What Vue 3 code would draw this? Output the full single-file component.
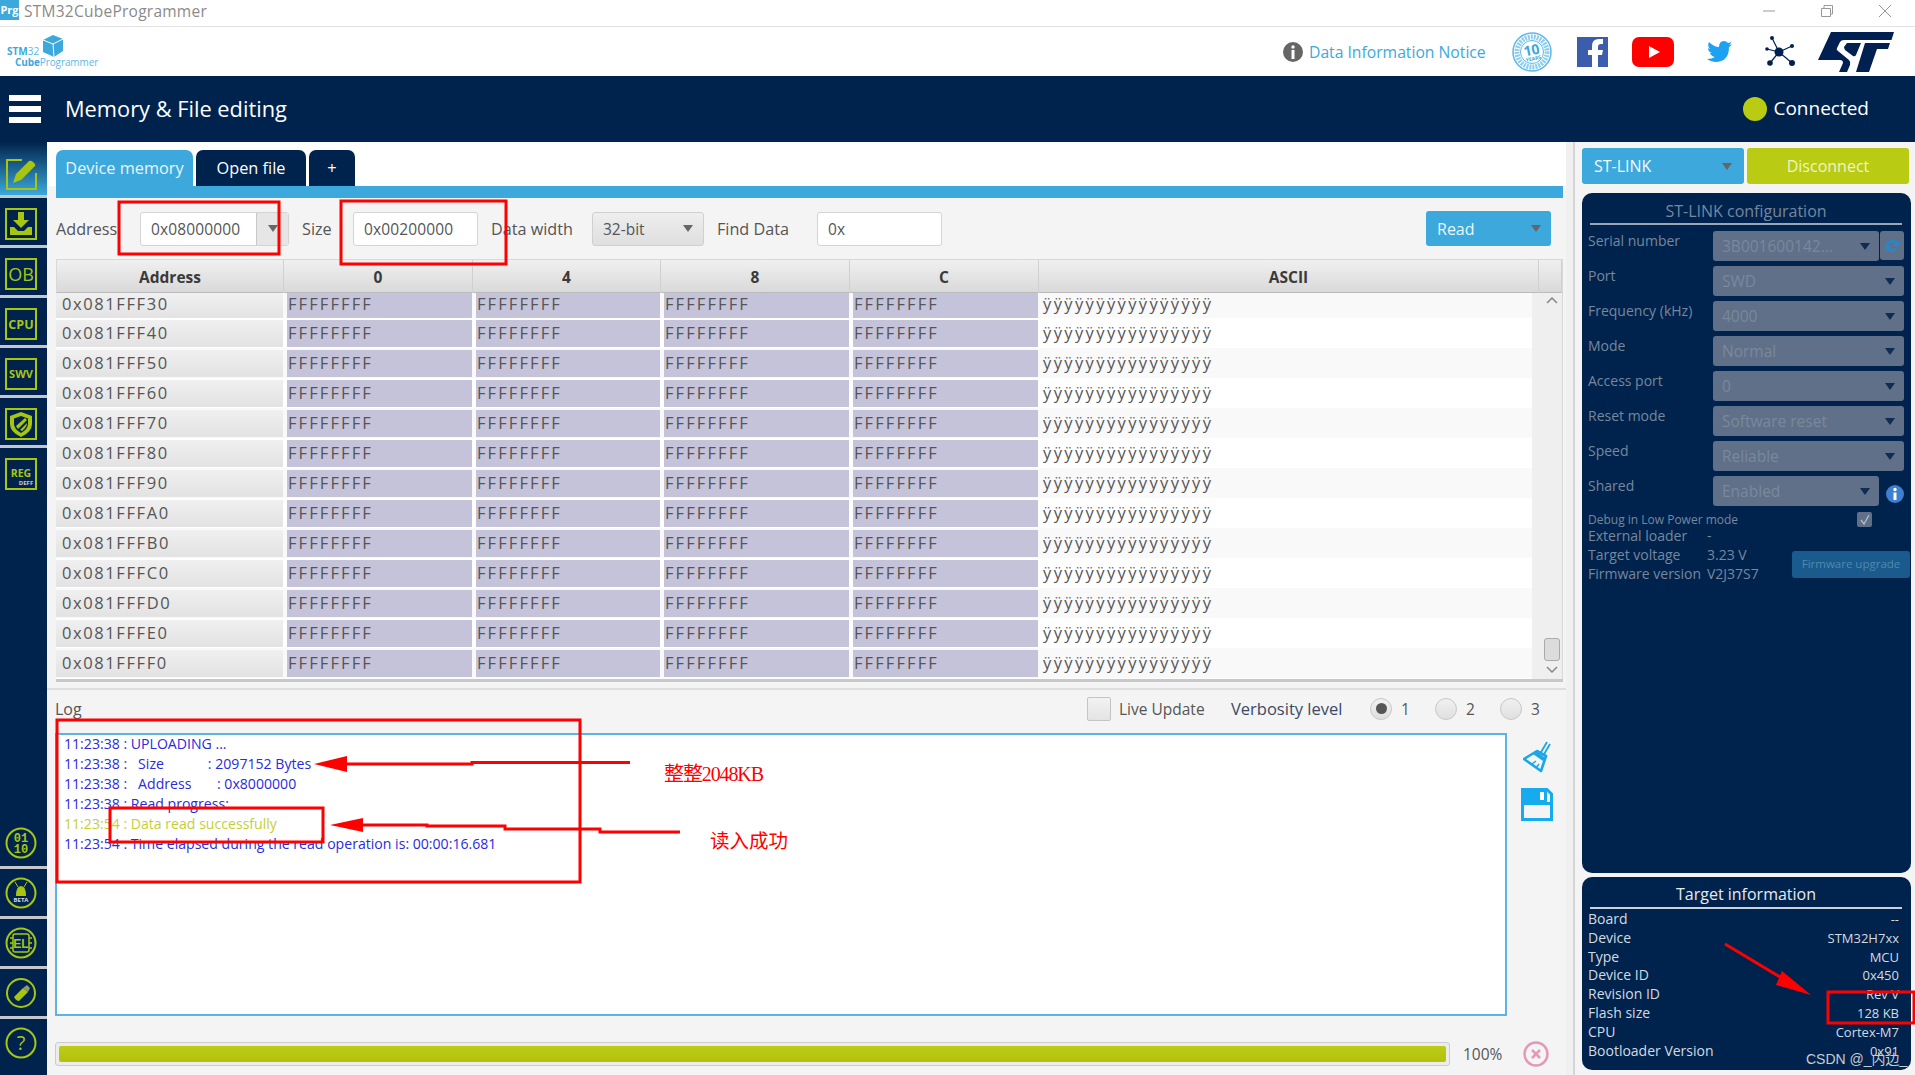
<script setup>
const rows = ['30','40','50','60','70','80','90','A0','B0','C0','D0','E0','F0'].map(s => '0x081FFF' + s)
const cfg = [
  { l: 'Serial number', v: '3B001600142...', cls: 'short', refresh: true },
  { l: 'Port', v: 'SWD' },
  { l: 'Frequency (kHz)', v: '4000' },
  { l: 'Mode', v: 'Normal' },
  { l: 'Access port', v: '0' },
  { l: 'Reset mode', v: 'Software reset' },
  { l: 'Speed', v: 'Reliable' },
  { l: 'Shared', v: 'Enabled', cls: 'short', info: true }
]
const target = [
  ['Board', '--'], ['Device', 'STM32H7xx'], ['Type', 'MCU'], ['Device ID', '0x450'],
  ['Revision ID', 'Rev V'], ['Flash size', '128 KB'], ['CPU', 'Cortex-M7'], ['Bootloader Version', '0x91']
]
const log = [
  { t: '11:23:38 : UPLOADING ...' },
  { t: '11:23:38 :   Size            : 2097152 Bytes' },
  { t: '11:23:38 :   Address       : 0x8000000' },
  { t: '11:23:38 : Read progress:' },
  { t: '11:23:54 : Data read successfully', ok: true },
  { t: '11:23:54 : Time elapsed during the read operation is: 00:00:16.681' }
]
</script>

<template>
  <div class="app">
    <div class="titlebar">
      <span class="prg">Prg</span>
      <span class="apptitle">STM32CubeProgrammer</span>
      <div class="winctl">
        <svg width="12" height="12" viewBox="0 0 12 12"><path d="M0 6H12" stroke="#999" fill="none"/></svg>
        <svg width="12" height="12" viewBox="0 0 12 12"><path d="M.5 3.5H9.5V11.5H.5ZM3 3V.5H11.5V9H10" stroke="#999" fill="none"/></svg>
        <svg width="12" height="12" viewBox="0 0 12 12"><path d="M0 0L12 12M12 0L0 12" stroke="#999" fill="none"/></svg>
      </div>
    </div>

    <div class="logobar">
      <div class="cubelogo">
        <svg class="cube" width="20" height="22" viewBox="0 0 20 22"><path d="M10 0L20 4V16L11 22L0 17V5Z" fill="#3ca8dc"/><path d="M0 5L10 9L20 4M10 9L11 22" stroke="#fff" fill="none"/></svg>
        <span class="l1"><b>STM</b>32</span>
        <span class="l2"><b>Cube</b>Programmer</span>
      </div>
      <div class="logoright">
        <svg class="i" width="20" height="20" viewBox="0 0 20 20"><circle cx="10" cy="10" r="10" fill="#666"/><rect x="8.5" y="8" width="3" height="9" fill="#fff"/><circle cx="10" cy="5" r="1.7" fill="#fff"/></svg>
        <span class="notice">Data Information Notice</span>
        <svg class="badge" width="40" height="40" viewBox="0 0 40 40"><circle cx="20" cy="20" r="19" fill="#fff" stroke="#5cb8e6" stroke-width="1.500"/><circle cx="20" cy="20" r="15" fill="none" stroke="#8ccdee" stroke-width="5" stroke-dasharray="2 1"/><circle cx="20" cy="20" r="11.500" fill="#fff" stroke="#5cb8e6"/><g transform="rotate(-12 20 20)" font-family="Open Sans" font-weight="700" text-anchor="middle" fill="#3ca8dc"><text x="20" y="23" font-size="14">10</text><text x="20" y="28.500" font-size="5">YEARS</text></g></svg>
        <svg class="fb" width="31" height="30" viewBox="0 0 31 30"><rect width="31" height="30" fill="#3b5dab"/><path d="M21 30V18H25L26 13H21V10Q21 7 24 7H26V2H22Q15 2 15 9V13H11V18H15V30Z" fill="#fff"/></svg>
        <svg class="yt" width="42" height="30" viewBox="0 0 42 30"><rect width="42" height="30" rx="7" fill="#f00"/><path d="M17 9L28 15L17 21Z" fill="#fff"/></svg>
        <svg class="tw" width="25" height="22" viewBox="0 0 25 22"><path d="M25 3Q23 4 22 4Q24 3 24 1Q22 2 21 2Q19 0 17 0Q12 0 12 6Q7 6 2 1Q0 5 3 8Q2 8 1 7Q1 11 5 12H3Q4 15 8 16Q5 18 0 18Q4 21 8 21Q22 21 22 6Q24 5 25 3Z" fill="#1da1f2"/></svg>
        <svg class="net" width="31" height="31" viewBox="0 0 31 31"><g stroke="#002052" stroke-width="1.2"><path d="M15 16L8 2M15 16L28 10M15 16L28 27M15 16L3 13M15 16L6 27"/></g><g fill="#002052"><circle cx="15" cy="16" r="4.5"/><circle cx="8" cy="2" r="2"/><circle cx="28" cy="10" r="2"/><circle cx="28" cy="27" r="3"/><circle cx="3" cy="13" r="1.8"/><circle cx="6" cy="27" r="2.8"/></g></svg>
        <svg class="st" width="77" height="40" viewBox="0 0 77 40"><path fill="#002052" d="M13 0H76L73.500 8H26Q23 8 22 10L19 16Q18 18 20 19L31 28Q33 30 32 33L29 40H21L25 31Q25 28 22 28H0Z"/><path fill="#002052" d="M29 11H43L38 23Q37 25 35 24L27 18Q26 16 26 15ZM47 11H72L70 17H59L51 40H38Z"/></svg>
      </div>
    </div>

    <div class="header">
      <div class="burger"><i></i><i></i><i></i></div>
      <span class="pagetitle">Memory &amp; File editing</span>
      <span class="dot"></span>
      <span class="connected">Connected</span>
    </div>

    <div class="body">
      <aside class="side">
        <div class="sidetop">
          <div class="si active">
            <svg width="34" height="34" viewBox="0 0 34 34"><path d="M18 3H3V32H32V16" fill="none" stroke="#a8c60f" stroke-width="2"/><path d="M9 26L12 17L25 4Q27 3 29 5L31 7Q32 9 30 10L17 23Z" fill="#a8c60f"/></svg>
          </div>
          <div class="si">
            <svg width="32" height="32" viewBox="0 0 32 32"><rect x="1" y="1" width="30" height="30" fill="none" stroke="#a8c60f" stroke-width="2"/><path d="M13 4H19V12H24L16 20L8 12H13ZM5 19H9L13 23H19L23 19H27V27H5Z" fill="#a8c60f"/></svg>
          </div>
          <div class="si">
            <svg width="32" height="32" viewBox="0 0 32 32"><rect x="1" y="1" width="30" height="30" fill="none" stroke="#a8c60f" stroke-width="2"/><text x="16" y="23" text-anchor="middle" font-size="18" fill="#a8c60f" font-family="Open Sans">OB</text></svg>
          </div>
          <div class="si">
            <svg width="32" height="32" viewBox="0 0 32 32"><rect x="1" y="1" width="30" height="30" fill="none" stroke="#a8c60f" stroke-width="2"/><text x="16" y="21" text-anchor="middle" font-size="12.500" font-weight="700" fill="#a8c60f" font-family="Open Sans">CPU</text></svg>
          </div>
          <div class="si">
            <svg width="32" height="32" viewBox="0 0 32 32"><rect x="1" y="1" width="30" height="30" fill="none" stroke="#a8c60f" stroke-width="2"/><text x="16" y="20" text-anchor="middle" font-size="11" font-weight="700" fill="#a8c60f" font-family="Open Sans">SWV</text></svg>
          </div>
          <div class="si">
            <svg width="32" height="32" viewBox="0 0 32 32"><rect x="1" y="1" width="30" height="30" fill="none" stroke="#a8c60f" stroke-width="2"/><path d="M16 4L27 8V16Q27 24 16 29Q5 24 5 16V8Z" fill="#a8c60f"/><path d="M16 8L23 10.500V16Q23 21 16 25Q9 21 9 16V10.500Z" fill="#00234d"/><path d="M11 18L20 10L22 12L13 21ZM15 22L22 15Q22 19 17 23Z" fill="#a8c60f"/></svg>
          </div>
          <div class="si nosep">
            <svg width="32" height="32" viewBox="0 0 32 32"><rect x="1" y="1" width="30" height="30" fill="none" stroke="#a8c60f" stroke-width="2"/><text x="16" y="19" text-anchor="middle" font-size="10.500" font-weight="700" fill="#a8c60f" font-family="Open Sans">REG</text><text x="21" y="27" text-anchor="middle" font-size="6" font-weight="700" fill="#c8ccd4" font-family="Open Sans">DEFF</text></svg>
          </div>
        </div>
        <div class="sidebot">
          <div class="si round">
            <svg width="32" height="32" viewBox="0 0 32 32"><circle cx="16" cy="16" r="14.500" fill="none" stroke="#a8c60f" stroke-width="2"/><text x="16" y="15" text-anchor="middle" font-size="12" font-weight="700" fill="#a8c60f" font-family="Liberation Mono">01</text><text x="16" y="25.500" text-anchor="middle" font-size="12" font-weight="700" fill="#a8c60f" font-family="Liberation Mono">10</text></svg>
          </div>
          <div class="si round">
            <svg width="32" height="32" viewBox="0 0 32 32"><circle cx="16" cy="16" r="14.500" fill="none" stroke="#a8c60f" stroke-width="2"/><path d="M10 5L13 10M22 5L19 10" stroke="#a8c60f" fill="none"/><path d="M11 19Q11 9 16 9Q21 9 21 19Z" fill="#a8c60f"/><text x="16" y="25" text-anchor="middle" font-size="6" font-weight="700" fill="#d6dbe0" font-family="Open Sans">BETA</text></svg>
          </div>
          <div class="si round">
            <svg width="32" height="32" viewBox="0 0 32 32"><circle cx="16" cy="16" r="14.500" fill="none" stroke="#a8c60f" stroke-width="2"/><rect x="8" y="7" width="16" height="18" rx="2" fill="none" stroke="#a8c60f" stroke-width="1.500"/><path d="M5 11H8M5 16H8M5 21H8M24 11H27M24 16H27M24 21H27" stroke="#a8c60f" stroke-width="1.500"/><text x="16" y="21" text-anchor="middle" font-size="12" font-weight="700" fill="#a8c60f" font-family="Liberation Sans">EL</text></svg>
          </div>
          <div class="si round">
            <svg width="32" height="32" viewBox="0 0 32 32"><circle cx="16" cy="16" r="14" fill="none" stroke="#a8c60f" stroke-width="2"/><path d="M9 20L18 11L23 15L14 24Q11 24 9 20Z" fill="#a8c60f"/><path d="M18 11L22 8L25 11L23 15Z" fill="#8d9a6a"/></svg>
          </div>
          <div class="si round nosep">
            <svg width="32" height="32" viewBox="0 0 32 32"><circle cx="16" cy="16" r="14.500" fill="none" stroke="#a8c60f" stroke-width="2"/><text x="16" y="23" text-anchor="middle" font-size="20" fill="#a8c60f" font-family="Open Sans">?</text></svg>
          </div>
        </div>
      </aside>

      <main class="main">
        <div class="tabstrip">
          <span class="tab on">Device memory</span>
          <span class="tab off">Open file</span>
          <span class="tab plus">+</span>
        </div>
        <div class="tabbar"></div>

        <div class="toolbar">
          <span class="lb w84">Address</span>
          <div class="combo"><span class="ctext">0x08000000</span><span class="carrow"><i class="tri"></i></span></div>
          <span class="lb w51 ml">Size</span>
          <div class="field">0x00200000</div>
          <span class="lb w101 ml">Data width</span>
          <div class="sel32"><span>32-bit</span><i class="tri"></i></div>
          <span class="lb w100 ml">Find Data</span>
          <div class="field">0x</div>
          <div class="readbtn"><span>Read</span><i class="tri"></i></div>
        </div>

        <div class="table">
          <div class="thead">
            <span>Address</span><span>0</span><span>4</span><span>8</span><span>C</span><span>ASCII</span><span></span>
          </div>
          <div class="tbody">
            <div class="trows">
              <div v-for="(r, i) in rows" :key="r" class="tr" :class="{ first: i === 0, even: i % 2 === 1 }">
                <span class="cell addr">{{ r }}</span>
                <span class="cell data">FFFFFFFF</span>
                <span class="cell data">FFFFFFFF</span>
                <span class="cell data">FFFFFFFF</span>
                <span class="cell data">FFFFFFFF</span>
                <span class="cell ascii">ÿÿÿÿÿÿÿÿÿÿÿÿÿÿÿÿ</span>
              </div>
            </div>
            <div class="scroll">
              <svg width="12" height="8" viewBox="0 0 12 8"><path d="M1 6L6 1L11 6" fill="none" stroke="#888" stroke-width="1.500"/></svg>
              <span class="thumb"></span>
              <svg width="12" height="8" viewBox="0 0 12 8"><path d="M1 2L6 7L11 2" fill="none" stroke="#888" stroke-width="1.500"/></svg>
            </div>
          </div>
        </div>

        <div class="logrule"></div>

        <div class="loghead">
          <span class="loglabel">Log</span>
          <span class="cb"></span>
          <span class="live">Live Update</span>
          <span class="verb">Verbosity level</span>
          <span class="radio sel"><i></i></span><span class="rl">1</span>
          <span class="radio"></span><span class="rl">2</span>
          <span class="radio"></span><span class="rl">3</span>
        </div>

        <div class="logrow">
          <div class="logbox">
            <div v-for="(l, i) in log" :key="i" class="logline" :class="{ ok: l.ok }">{{ l.t }}</div>
          </div>
          <div class="logtools">
            <svg width="28" height="32" viewBox="0 0 28 32"><path d="M17 13L24 1M20 15L27 3" stroke="#1aa7e8" stroke-width="1.800" fill="none"/><path d="M1 18L14 10L23 15L18 30Z" fill="none" stroke="#1aa7e8" stroke-width="2.600" stroke-linejoin="round"/><path d="M13 10L22 17L20 20L10 13Z" fill="#1aa7e8"/><path d="M9 23L13 20M13 27L16 23" stroke="#1aa7e8" stroke-width="1.500"/></svg>
            <svg width="32" height="33" viewBox="0 0 32 33"><path d="M1.500 1.500H26L30.500 6V31.500H1.500Z" fill="none" stroke="#16aaef" stroke-width="3"/><path d="M1.500 1.500H26V15H1.500ZM1.500 14H30.500V17H1.500Z" fill="#16aaef"/><rect x="19" y="4" width="4" height="8" fill="#fff"/></svg>
          </div>
        </div>

        <div class="progressrow">
          <div class="progress"><div class="fill"></div></div>
          <span class="pct">100%</span>
          <svg class="cancel" width="26" height="26" viewBox="0 0 26 26"><circle cx="13" cy="13" r="11.500" fill="none" stroke="#e29ab8" stroke-width="2.500"/><path d="M9 9L17 17M17 9L9 17" stroke="#e29ab8" stroke-width="2.500"/></svg>
        </div>
      </main>

      <div class="splitter"></div>

      <section class="right">
        <div class="conn">
          <div class="stlink"><span>ST-LINK</span><i class="tri"></i></div>
          <div class="disc">Disconnect</div>
        </div>

        <div class="panel cfg">
          <div class="ptitle dim">ST-LINK configuration</div>
          <div class="prule"></div>
          <div v-for="c in cfg" :key="c.l" class="cfgrow">
            <span class="clabel">{{ c.l }}</span>
            <div class="cselect" :class="c.cls"><span>{{ c.v }}</span><i class="tri dark"></i></div>
            <div v-if="c.refresh" class="refresh">
              <svg width="18" height="18" viewBox="0 0 18 18"><path d="M3 8Q4 3 9 3Q12 3 14 5L16 3V9H10L12 7Q11 5.500 9 5.500Q6.500 5.500 5.500 8ZM15 10Q14 15 9 15Q6 15 4 13L2 15V9H8L6 11Q7 12.500 9 12.500Q11.500 12.500 12.500 10Z" fill="#2a86c8"/></svg>
            </div>
            <svg v-if="c.info" class="infoi" width="18" height="18" viewBox="0 0 18 18"><circle cx="9" cy="9" r="9" fill="#3f7fd0"/><rect x="7.500" y="7.500" width="3" height="7.500" fill="#fff"/><circle cx="9" cy="4.500" r="1.700" fill="#fff"/></svg>
          </div>
          <div class="debug">
            <span>Debug in Low Power mode</span>
            <span class="ck"><svg width="12" height="12" viewBox="0 0 12 12"><path d="M2 6L5 10L10 1" fill="none" stroke="#b4bcc8" stroke-width="1.300"/></svg></span>
          </div>
          <div class="fwwrap">
            <div class="fwinfo">
              <div class="fwline"><span class="fwk">External loader</span><span>-</span></div>
              <div class="fwline"><span class="fwk">Target voltage</span><span>3.23 V</span></div>
              <div class="fwline"><span class="fwk">Firmware version</span><span>V2J37S7</span></div>
            </div>
            <div class="fwbtn">Firmware upgrade</div>
          </div>
        </div>

        <div class="panel tgt">
          <div class="ptitle">Target information</div>
          <div class="prule light"></div>
          <div class="tgtrows">
            <div v-for="t in target" :key="t[0]" class="tgtrow"><span>{{ t[0] }}</span><span>{{ t[1] }}</span></div>
          </div>
        </div>
      </section>
    </div>

    <svg class="marks" width="1915" height="1075" viewBox="0 0 1915 1075">
      <g fill="none" stroke="#f00" stroke-width="3">
        <rect x="119" y="202" width="160" height="52"/>
        <rect x="341" y="201" width="165" height="63"/>
        <rect x="57" y="720" width="523" height="162"/>
        <rect x="110" y="808" width="213" height="34"/>
        <rect x="1828" y="992" width="86" height="31"/>
        <path d="M345 764H472V762.500H630"/>
        <path d="M360 825H427V826H505V829H600V832H680"/>
        <path d="M1725 944L1790 983"/>
      </g>
      <path d="M314 764L347 756V772Z" fill="#f00"/>
      <path d="M330 825L363 818V832Z" fill="#f00"/>
      <path d="M1811 995L1782 971L1776 985Z" fill="#f00"/>
      <text x="664" y="781" class="zh" font-size="20" textLength="100">整整2048KB</text>
      <text x="710" y="848" class="zh" font-size="19.500">读入成功</text>
      <text x="1806" y="1064" class="wm">CSDN @_内边_</text>
    </svg>
  </div>
</template>

<style>
html, body { margin: 0; padding: 0; background: #fff; }
</style>

<style scoped>
.app {
  position: relative;
  width: 1915px;
  height: 1075px;
  overflow: hidden;
  display: flex;
  flex-direction: column;
  font-family: "Open Sans", "Noto Sans CJK SC", sans-serif;
  color: #444;
  background: #fff;
}
.titlebar {
  height: 26px;
  flex: none;
  display: flex;
  align-items: flex-start;
  border-bottom: 1px solid #e2e2e2;
}
.prg {
  width: 19px;
  height: 20px;
  background: #3ca8dc;
  color: #fff;
  font-size: 11px;
  font-weight: 700;
  line-height: 19px;
  text-align: center;
}
.apptitle {
  margin-left: 5px;
  font-size: 15.5px;
  letter-spacing: 0.25px;
  line-height: 22px;
  color: #8a8a8a;
}
.winctl {
  margin-left: auto;
  display: flex;
  gap: 46px;
  padding: 5px 24px 0 0;
}
.logobar {
  height: 49px;
  flex: none;
  display: flex;
  align-items: center;
  justify-content: space-between;
}
.cubelogo {
  position: relative;
  width: 100px;
  height: 33px;
  margin-left: 7px;
  color: #5cb8e6;
  font-size: 10px;
  line-height: 12px;
}
.cubelogo b { color: #3ca8dc; }
.cube { position: absolute; left: 36px; top: 0; }
.l1 { position: absolute; left: 0; top: 10px; }
.l2 { position: absolute; left: 8px; top: 21px; letter-spacing: -0.1px; }
.logoright {
  display: flex;
  align-items: center;
  padding-right: 20px;
}
.notice {
  margin-left: 6px;
  width: 178px;
  color: #3ca8dc;
  font-size: 15.700px;
  line-height: 20px;
  white-space: nowrap;
}
.badge { margin-left: 25px; }
.fb { margin-left: 25px; }
.yt { margin-left: 24px; }
.tw { margin-left: 33px; }
.net { margin-left: 32px; }
.st { margin-left: 23px; }
.header {
  height: 66px;
  flex: none;
  display: flex;
  align-items: center;
  background: #00234d;
  color: #fff;
}
.burger {
  width: 32px;
  height: 28px;
  margin-left: 9px;
  display: flex;
  flex-direction: column;
  justify-content: space-between;
}
.burger i { display: block; height: 6px; background: #fff; }
.pagetitle { margin-left: 24px; padding-bottom: 2px; font-size: 21.800px; }
.dot {
  width: 24px;
  height: 24px;
  margin-left: auto;
  border-radius: 50%;
  background: #b9cb12;
}
.connected { margin: 0 46px 0 6px; padding-bottom: 2px; font-size: 19px; }

.body {
  flex: 1;
  min-height: 0;
  display: flex;
  background: #f4f4f4;
}
.side {
  width: 47px;
  flex: none;
  display: flex;
  flex-direction: column;
  justify-content: space-between;
  background: #00234d;
}
.si {
  height: 47px;
  box-sizing: content-box;
  display: flex;
  align-items: center;
  justify-content: center;
  padding-right: 5px;
  border-bottom: 3px solid #c4c8cc;
}
.sidetop .si { height: 42px; padding-top: 5px; }
.si.nosep { border-bottom: none; }
.sidetop .si.active {
  height: 43px;
  padding-top: 10px;
  background: linear-gradient(#00234d, #3ca8dc);
}
.sidetop { display: flex; flex-direction: column; }
.sidebot { display: flex; flex-direction: column; padding-bottom: 9px; }

.main {
  width: 1519px;
  flex: none;
  display: flex;
  flex-direction: column;
}
.tabstrip {
  height: 44px;
  padding: 8px 3px 0 9px;
  box-sizing: border-box;
  display: flex;
  gap: 3px;
  background: #fff;
}
.tab {
  display: flex;
  align-items: center;
  justify-content: center;
  height: 36px;
  border-radius: 7px 7px 0 0;
  color: #fff;
  font-size: 16.300px;
  background: #00234d;
}
.tab.on { width: 137px; background: #3ca8dc; color: #e8f5fb; }
.tab.off { width: 110px; }
.tab.plus { width: 46px; }
.tabbar {
  height: 12px;
  margin: 0 3px 0 9px;
  background: #3ca8dc;
}
.toolbar {
  height: 35px;
  margin: 13px 15px 0 9px;
  display: flex;
  align-items: center;
}
.lb { font-size: 16.200px; color: #555; white-space: nowrap; }
.w84 { width: 84px; }
.w51 { width: 51px; }
.w101 { width: 101px; }
.w100 { width: 100px; }
.ml { margin-left: 13px; }
.combo {
  width: 149px;
  height: 34px;
  box-sizing: border-box;
  display: flex;
  border: 1px solid #d4d4d4;
  border-radius: 3px;
  background: #fff;
  font-size: 15.500px;
}
.ctext { width: 115px; padding-left: 10px; line-height: 33px; box-sizing: border-box; color: #555; letter-spacing: .15px; }
.carrow {
  flex: 1;
  display: flex;
  align-items: center;
  justify-content: center;
  background: #e6e6e6;
  border-left: 1px solid #c8c8c8;
}
.tri {
  display: inline-block;
  width: 0;
  height: 0;
  border-left: 5px solid transparent;
  border-right: 5px solid transparent;
  border-top: 7px solid #666;
}
.field {
  width: 125px;
  height: 34px;
  box-sizing: border-box;
  padding-left: 10px;
  border: 1px solid #d4d4d4;
  border-radius: 3px;
  background: #fff;
  color: #555;
  font-size: 15.500px;
  letter-spacing: .15px;
  line-height: 33px;
}
.sel32 {
  width: 112px;
  height: 34px;
  box-sizing: border-box;
  padding: 0 10px;
  display: flex;
  align-items: center;
  justify-content: space-between;
  border: 1px solid #d0d0d0;
  border-radius: 3px;
  background: linear-gradient(#eee, #dfdfdf);
  color: #555;
  font-size: 15.500px;
}
.readbtn {
  margin-left: auto;
  width: 125px;
  height: 35px;
  box-sizing: border-box;
  padding: 0 10px 0 11px;
  display: flex;
  align-items: center;
  justify-content: space-between;
  border-radius: 3px;
  background: #3ca8dc;
  color: #eaf6fc;
  font-size: 16px;
}

.table {
  height: 423px;
  margin: 13px 3px 0 9px;
  display: flex;
  flex-direction: column;
  box-sizing: border-box;
  border-bottom: 3px solid #c8c8c8;
}
.thead {
  height: 34px;
  flex: none;
  display: grid;
  grid-template-columns: 227px 189px 188px 189px 189px 500px 1fr;
  box-sizing: border-box;
  border: 1px solid #d8d8d8;
  border-bottom-color: #bbb;
  background: linear-gradient(#f0f0f0, #d9d9d9);
}
.thead span {
  text-align: center;
  font-size: 15.500px;
  font-weight: 700;
  line-height: 35px;
  color: #3a3a3a;
  border-right: 1px solid #d0d0d0;
}
.tbody { flex: 1; min-height: 0; display: flex; background: #fff; }
.trows { width: 1476px; display: flex; flex-direction: column; }
.tr {
  height: 30px;
  flex: none;
  display: grid;
  grid-template-columns: 227px 189px 188px 189px 189px 494px;
  box-sizing: border-box;
  padding: 2px 0 1px;
  background: #f9f9f9;
  overflow: hidden;
}
.tr.even { background: #fff; }
.tr.first { height: 25px; padding-top: 0; align-items: end; }
.cell {
  height: 27px;
  line-height: 26px;
  font-size: 16.500px;
  white-space: nowrap;
  box-sizing: border-box;
}
.tr.first .cell { line-height: 22px; }
.addr {
  padding-left: 6px;
  background: linear-gradient(#f0f0f0, #e2e2e2);
  color: #555;
  letter-spacing: 1.600px;
}
.data {
  margin-left: 4px;
  padding-left: 1px;
  background: #c5c3da;
  color: #555;
  letter-spacing: 2.100px;
}
.ascii {
  margin-left: 4px;
  padding-left: 1px;
  color: #555;
  letter-spacing: 2.380px;
}
.scroll {
  flex: 1;
  display: flex;
  flex-direction: column;
  align-items: center;
  justify-content: flex-end;
  box-sizing: border-box;
  padding: 4px 0 6px 9px;
  background: #efefef;
  border-right: 1px solid #d8d8d8;
}
.scroll svg:first-child { margin-bottom: auto; }
.thumb {
  width: 16px;
  height: 23px;
  margin: 0 0 4px;
  background: #dcdcdc;
  border: 1px solid #aaa;
  border-radius: 3px;
  box-sizing: border-box;
}
.logrule {
  height: 2px;
  margin-top: 6px;
  background: #dedede;
}
.loghead {
  height: 43px;
  box-sizing: border-box;
  padding-bottom: 6px;
  margin: 0 0 0 8px;
  display: flex;
  align-items: center;
}
.loglabel { width: 1032px; font-size: 16px; color: #555; }
.cb {
  width: 24px;
  height: 24px;
  box-sizing: border-box;
  border: 1px solid #c4c4c4;
  border-radius: 2px;
  background: linear-gradient(#f2f2f2, #e4e4e4);
}
.live { margin-left: 8px; width: 112px; font-size: 15.500px; color: #555; }
.verb { width: 139px; font-size: 16.500px; color: #3a4a63; }
.radio {
  width: 22px;
  height: 22px;
  box-sizing: border-box;
  display: flex;
  align-items: center;
  justify-content: center;
  border: 1px solid #c8c8c8;
  border-radius: 50%;
  background: linear-gradient(#f0f0f0, #e0e0e0);
}
.radio i { width: 11px; height: 11px; border-radius: 50%; background: #555; }
.rl { width: 43px; padding-left: 9px; box-sizing: border-box; font-size: 15.500px; color: #555; }
.logrow { height: 283px; display: flex; margin-left: 8px; }
.logbox {
  width: 1452px;
  box-sizing: border-box;
  padding: 0 0 0 7px;
  border: 2px solid #5ab5e6;
  background: #fff;
}
.logline {
  height: 20px;
  line-height: 17px;
  font-size: 14.100px;
  color: #2a2adf;
  white-space: pre;
}
.logline.ok { color: #c4cf35; }
.logtools {
  flex: 1;
  display: flex;
  flex-direction: column;
  align-items: center;
  gap: 15px;
  padding-top: 8px;
}
.progressrow {
  margin: 26px 0 0 8px;
  height: 24px;
  display: flex;
  align-items: center;
}
.progress {
  width: 1395px;
  height: 24px;
  box-sizing: border-box;
  padding: 3px;
  border: 1px solid #ccc;
  border-radius: 3px;
  background: #ececec;
}
.fill { height: 100%; border-radius: 2px; background: linear-gradient(#bccb14, #b2c10c); }
.pct { width: 60px; padding-left: 13px; box-sizing: border-box; font-size: 15.500px; color: #555; }
.cancel { margin-left: 13px; }

.splitter {
  width: 9px;
  flex: none;
  box-sizing: border-box;
  background: #f0f0f0;
  border-right: 2px solid #d6d6d6;
}
.right {
  flex: 1;
  min-width: 0;
  box-sizing: border-box;
  padding: 6px 4px 5px 7px;
  display: flex;
  flex-direction: column;
}
.conn { display: flex; gap: 3px; height: 36px; flex: none; padding-right: 2px; }
.stlink {
  width: 162px;
  box-sizing: border-box;
  padding: 0 12px;
  display: flex;
  align-items: center;
  justify-content: space-between;
  border-radius: 3px;
  background: #3ca8dc;
  color: #f2fafd;
  font-size: 16px;
}
.disc {
  flex: 1;
  display: flex;
  align-items: center;
  justify-content: center;
  border-radius: 3px;
  background: #b9cb12;
  color: #f0f5c4;
  font-size: 16px;
}
.panel {
  background: #00234d;
  border-radius: 10px;
}
.cfg {
  height: 680px;
  flex: none;
  margin-top: 9px;
  padding: 0 7px 0 6px;
  box-sizing: border-box;
}
.ptitle {
  text-align: center;
  font-size: 16px;
  color: #e6eaf0;
}
.ptitle.dim { height: 30px; line-height: 36px; color: #7587a0; }
.prule { height: 2px; margin: 0 2px 0 2px; background: #9aa6b6; }
.prule.light { background: #c9d0d9; }
.cfg .prule { margin-bottom: 6px; }
.cfgrow {
  height: 30px;
  margin-bottom: 5px;
  display: flex;
  align-items: flex-start;
}
.clabel {
  width: 125px;
  flex: none;
  font-size: 14px;
  line-height: 20px;
  color: #76879e;
}
.cselect {
  width: 191px;
  height: 30px;
  box-sizing: border-box;
  padding: 0 9px;
  display: flex;
  align-items: center;
  justify-content: space-between;
  border-radius: 3px;
  background: #5f7088;
  color: #7a889c;
  font-size: 15.500px;
}
.cselect.short { width: 166px; }
.tri.dark { border-top-color: #0f2c52; }
.refresh {
  width: 24px;
  height: 29px;
  margin-left: 1px;
  display: flex;
  align-items: center;
  justify-content: center;
  border-radius: 3px;
  background: #5f7088;
}
.infoi { margin: 9px 0 0 7px; }
.debug {
  height: 17px;
  margin-top: 1px;
  display: flex;
  align-items: center;
  justify-content: space-between;
  padding-right: 32px;
  font-size: 12px;
  color: #76879e;
}
.ck {
  width: 15px;
  height: 15px;
  display: flex;
  align-items: center;
  justify-content: center;
  border-radius: 2px;
  background: #5f7088;
}
.fwwrap { display: flex; justify-content: space-between; margin-top: -2px; }
.fwinfo { font-size: 14px; color: #76879e; }
.fwline { height: 19px; line-height: 19px; display: flex; }
.fwk { width: 119px; }
.fwbtn {
  width: 118px;
  height: 27px;
  margin: 25px -6px 0 0;
  border-radius: 3px;
  background: #1a5a8c;
  color: #4f89b0;
  font-size: 11.500px;
  line-height: 26px;
  text-align: center;
}
.tgt {
  flex: 1;
  margin-top: 4px;
  padding: 0 7px 0 6px;
}
.tgt .ptitle { height: 30px; line-height: 34px; }
.tgtrows { padding: 1px 5px 0 0; }
.tgtrow {
  height: 18.800px;
  line-height: 18.800px;
  display: flex;
  justify-content: space-between;
  font-size: 14px;
  color: #d4dae2;
}
.tgtrow span:last-child { font-size: 13px; }
.marks {
  position: absolute;
  left: 0;
  top: 0;
  pointer-events: none;
}
.zh {
  fill: #f00;
  font-family: "Liberation Serif", "Noto Sans CJK SC", serif;
}
.wm {
  fill: #c6ccd4;
  font-size: 14px;
  font-family: "Liberation Sans", "Noto Sans CJK SC", sans-serif;
}
</style>
